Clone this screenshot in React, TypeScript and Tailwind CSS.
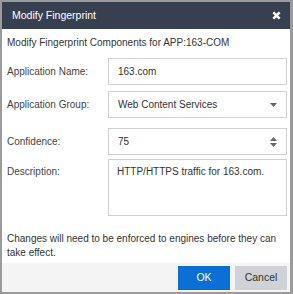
import React from "react";

export default function App() {
  const font = { fontFamily: '"Liberation Sans", Arial, sans-serif' };
  return (
    <div
      className="w-[293px] h-[294px] bg-white border-2 border-r-[3px] border-[#9b9b9b] flex flex-col text-[10px] text-[#333]"
      style={font}
    >
      <div className="h-[27px] shrink-0 bg-[#364051] flex items-center justify-between pl-[10px] pr-[9px]">
        <span className="text-white text-[10.5px]">Modify Fingerprint</span>
        <svg width="9" height="9" viewBox="0 0 10 10">
          <path d="M1.5 1.5 L8.5 8.5 M8.5 1.5 L1.5 8.5" stroke="#ffffff" strokeWidth="2.8" strokeLinecap="butt" />
        </svg>
      </div>
      <div className="flex flex-col pl-[5px] pr-[3px]">
        <div className="h-[14px] leading-[14px] mt-[7px]">Modify Fingerprint Components for APP:163-COM</div>
        <div className="flex flex-col mt-[8px]">
          <div className="flex items-center">
            <div className="w-[101px] text-[#444]">Application Name:</div>
            <div className="w-[179px] h-[27px] border border-[#d0d0d0] flex items-center pl-[9px]">163.com</div>
          </div>
          <div className="flex items-center mt-[6px]">
            <div className="w-[101px] text-[#444]">Application Group:</div>
            <div className="w-[179px] h-[27px] border border-[#d0d0d0] flex items-center justify-between pl-[9px] pr-[9px]">
              <span>Web Content Services</span>
              <svg width="7" height="4" viewBox="0 0 7 4">
                <path d="M0 0 L7 0 L3.5 4 Z" fill="#666" />
              </svg>
            </div>
          </div>
          <div className="flex items-center mt-[10px]">
            <div className="w-[101px] text-[#444]">Confidence:</div>
            <div className="w-[179px] h-[27px] border border-[#d0d0d0] flex items-center justify-between pl-[9px] pr-[9px]">
              <span>75</span>
              <svg width="7" height="10" viewBox="0 0 7 10">
                <path d="M0 4 L7 4 L3.5 0 Z" fill="#666" />
                <path d="M0 6 L7 6 L3.5 10 Z" fill="#666" />
              </svg>
            </div>
          </div>
          <div className="flex items-start mt-[4px]">
            <div className="w-[101px] text-[#444] pt-[5px]">Description:</div>
            <div className="w-[179px] h-[57px] border border-[#d0d0d0] pl-[8px] pt-[4px]">HTTP/HTTPS traffic for 163.com.</div>
          </div>
        </div>
        <div className="mt-[16px] leading-[14px] text-[10px]">
          Changes will need to be enforced to engines before they can take effect.
        </div>
      </div>
      <div className="flex-1 mt-[3px] bg-[#f4f4f4] flex justify-end items-center gap-[5px] pr-[3px]">
        <div className="w-[52px] h-[24px] bg-[#0b6fd6] text-white flex items-center justify-center text-[10.5px]">OK</div>
        <div className="w-[52px] h-[24px] bg-[#cfd2d6] text-[#333] flex items-center justify-center text-[10.5px]">Cancel</div>
      </div>
    </div>
  );
}
